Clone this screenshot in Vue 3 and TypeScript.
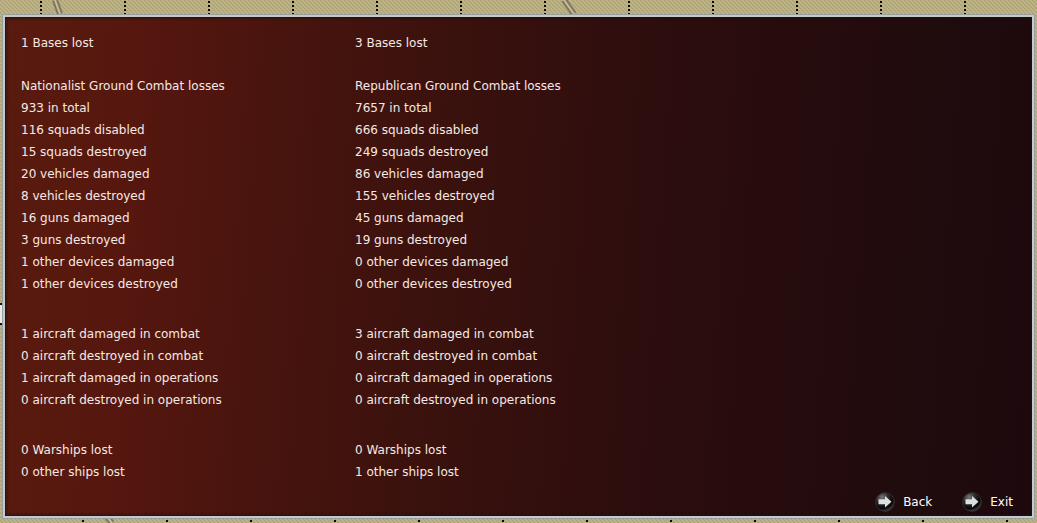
<script setup lang="ts">
interface Side {
  name: string
  groups: string[][]
}

const sides: Side[] = [
  {
    name: 'Nationalist',
    groups: [
      ['1 Bases lost'],
      [
        'Nationalist Ground Combat losses',
        '933 in total',
        '116 squads disabled',
        '15 squads destroyed',
        '20 vehicles damaged',
        '8 vehicles destroyed',
        '16 guns damaged',
        '3 guns destroyed',
        '1 other devices damaged',
        '1 other devices destroyed',
      ],
      [
        '1 aircraft damaged in combat',
        '0 aircraft destroyed in combat',
        '1 aircraft damaged in operations',
        '0 aircraft destroyed in operations',
      ],
      ['0 Warships lost', '0 other ships lost'],
    ],
  },
  {
    name: 'Republican',
    groups: [
      ['3 Bases lost'],
      [
        'Republican Ground Combat losses',
        '7657 in total',
        '666 squads disabled',
        '249 squads destroyed',
        '86 vehicles damaged',
        '155 vehicles destroyed',
        '45 guns damaged',
        '19 guns destroyed',
        '0 other devices damaged',
        '0 other devices destroyed',
      ],
      [
        '3 aircraft damaged in combat',
        '0 aircraft destroyed in combat',
        '0 aircraft damaged in operations',
        '0 aircraft destroyed in operations',
      ],
      ['0 Warships lost', '1 other ships lost'],
    ],
  },
]

const actions: string[] = ['Back', 'Exit']
</script>

<template>
  <div class="map">
    <svg class="terrain" aria-hidden="true">
      <defs>
        <pattern id="weave" width="4" height="4" patternUnits="userSpaceOnUse">
          <rect width="4" height="4" fill="#b9ae80" />
          <path d="M0 0h1v1H0zM1 1h1v1H1zM2 2h1v1H2zM3 3h1v1H3z" fill="#aba073" />
          <path d="M2 0h1v1H2zM3 1h1v1H3zM0 2h1v1H0zM1 3h1v1H1z" fill="#c1b789" />
        </pattern>
        <pattern id="grid-top" width="84" height="4" patternUnits="userSpaceOnUse">
          <rect x="40" y="1" width="2" height="2" fill="#0c0906" />
        </pattern>
        <pattern id="grid-bottom" width="84" height="4" patternUnits="userSpaceOnUse">
          <rect x="82" y="0" width="2" height="2" fill="#0c0906" />
        </pattern>
      </defs>
      <rect width="100%" height="100%" fill="url(#weave)" />
      <rect width="100%" height="14" fill="url(#grid-top)" />
      <rect y="520" width="100%" height="3" fill="url(#grid-bottom)" />
      <g fill="none" stroke-width="6" stroke="#80765a">
        <path d="M55 0L60 14M564 0L574 14M107 517L112 523" />
      </g>
      <g fill="none" stroke-width="2" stroke="#c6bea0">
        <path d="M55 0L60 14M564 0L574 14M107 517L112 523" />
      </g>
      <path d="M0 303h3v22H0z" fill="#15120d" />
      <path d="M0 305h3v18H0z" fill="#e9e9ec" />
    </svg>
    <main class="panel">
      <div class="report">
        <section v-for="side in sides" :key="side.name" class="side" :aria-label="side.name">
          <ul v-for="(group, i) in side.groups" :key="i" class="group">
            <li v-for="line in group" :key="line">{{ line }}</li>
          </ul>
        </section>
      </div>
      <nav class="actions">
        <button v-for="action in actions" :key="action" type="button" class="action">
          <svg class="orb" viewBox="0 0 20 20" aria-hidden="true">
            <defs>
              <radialGradient :id="'orb-' + action" cx="0.35" cy="0.25" r="0.8">
                <stop offset="0" stop-color="#77777a" />
                <stop offset="0.45" stop-color="#242426" />
                <stop offset="0.75" stop-color="#050505" />
                <stop offset="1" stop-color="#4c4c4c" />
              </radialGradient>
            </defs>
            <circle cx="10" cy="10" r="9.3" :fill="`url(#orb-${action})`" stroke="#343133" />
            <path d="M3.5 7.2h6.5V4l6.5 5.7-6.5 5.7v-3.2H3.5z" fill="#dedede" />
          </svg>
          <span>{{ action }}</span>
        </button>
      </nav>
    </main>
  </div>
</template>

<style>
body {
  margin: 0;
}
</style>

<style scoped>
.map {
  position: relative;
  box-sizing: border-box;
  min-height: 100vh;
  padding: 14px 2px 4px 2px;
  display: flex;
  overflow: hidden;
  background: #b9ae80;
  font-family: "DejaVu Sans", Verdana, sans-serif;
  font-size: 12px;
  color: #f6e9e4;
}

.terrain {
  position: absolute;
  inset: 0;
  width: 100%;
  height: 100%;
}

.panel {
  position: relative;
  flex: 1;
  box-sizing: border-box;
  display: flex;
  flex-direction: column;
  justify-content: space-between;
  border: 1px solid #999e9f;
  box-shadow: inset 0 0 0 2px #c6c9ca, inset 0 0 3px 3px #1b1414;
  padding: 17px 21px 6px 18px;
  background: linear-gradient(94deg, #591a0f 0%, #56170e 12%, #48140e 27%, #38110d 45%, #2d0d0e 62%, #260c0d 76%, #200b0d 88%, #1d090d 100%);
}

.report {
  display: flex;
}

.side {
  width: 334px;
}

.group {
  list-style: none;
  margin: 0 0 28px;
  padding: 0;
  line-height: 22px;
  white-space: nowrap;
}

.group:first-child {
  margin-bottom: 21px;
}

.group:last-child {
  margin-bottom: 0;
}

.actions {
  display: flex;
  justify-content: flex-end;
  gap: 30px;
}

.action {
  display: flex;
  align-items: center;
  gap: 8px;
  padding: 0;
  border: 0;
  background: none;
  color: #fff;
  font: inherit;
  line-height: 18px;
  cursor: pointer;
}

.orb {
  width: 20px;
  height: 20px;
}
</style>
